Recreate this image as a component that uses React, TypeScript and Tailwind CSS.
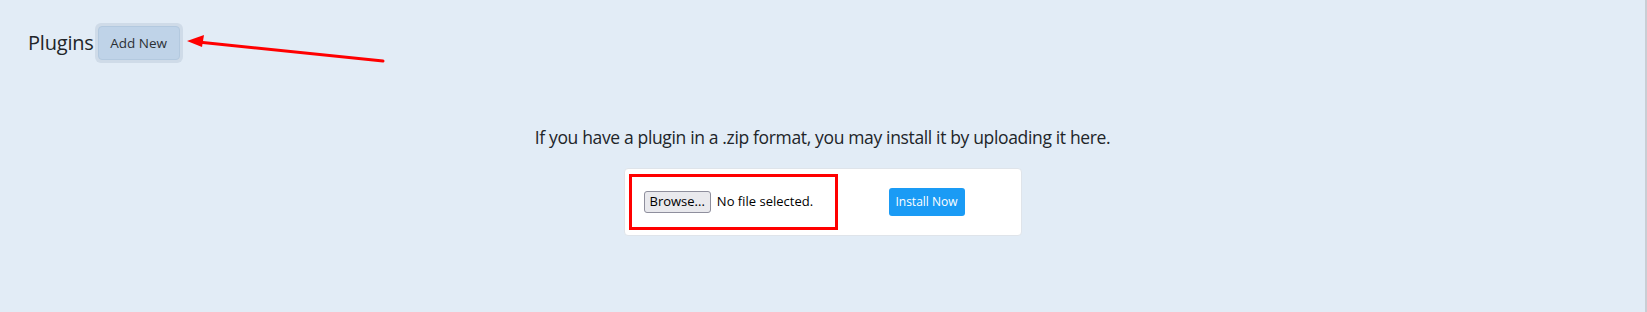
import React from "react";

const RedArrow = () => (
    <svg
        className="absolute left-[180px] top-[34px]"
        width="210"
        height="34"
        viewBox="0 0 210 34"
    >
        <line x1="203" y1="27" x2="18" y2="8" stroke="#ff0000" strokeWidth="3" strokeLinecap="round" />
        <polygon points="7,7 24,1 22,13" fill="#ff0000" />
    </svg>
);

const App = () => {
    return (
        <div className="relative w-[1647px] h-[312px] bg-[#e2ecf6] border-r-2 border-[#c9ced4] font-['Open_Sans',sans-serif] text-[#212529] overflow-hidden">
            <div className="flex items-center pl-[28px] pt-[23px]">
                <h1 className="text-[20px] leading-none tracking-[-0.2px] mr-[1px]">Plugins</h1>
                <div className="rounded-[6px] bg-[#cfdbe8] p-[3px]">
                    <button className="w-[82px] h-[34px] rounded-[4px] bg-[#bfd3e8] border border-[#b3c9df] text-[13.5px] text-[#2b3035]">
                        Add New
                    </button>
                </div>
            </div>
            <RedArrow />

            <div className="flex flex-col items-center pt-[63px]">
                <p className="text-[17.5px] leading-[22px] tracking-[-0.35px]">
                    If you have a plugin in a .zip format, you may install it by uploading it here.
                </p>
                <div className="mt-[20px] w-[398px] h-[68px] bg-white rounded-[4px] border border-[#dfe4ea] flex items-center pl-[4px]">
                    <div className="w-[209px] h-[56px] border-[3px] border-[#ff0000] flex items-center pl-[12px]">
                        <span className="h-[22px] px-[5px] flex items-center rounded-[3px] border border-[#8f8f9d] bg-[#e9e9ed] text-[13px] text-black">
                            Browse...
                        </span>
                        <span className="ml-[6px] text-[13px] text-black">No file selected.</span>
                    </div>
                    <button className="ml-[51px] w-[76px] h-[28px] rounded-[3px] bg-[#1a9bf5] text-white text-[12px]">
                        Install Now
                    </button>
                </div>
            </div>
        </div>
    );
};

export default App;
